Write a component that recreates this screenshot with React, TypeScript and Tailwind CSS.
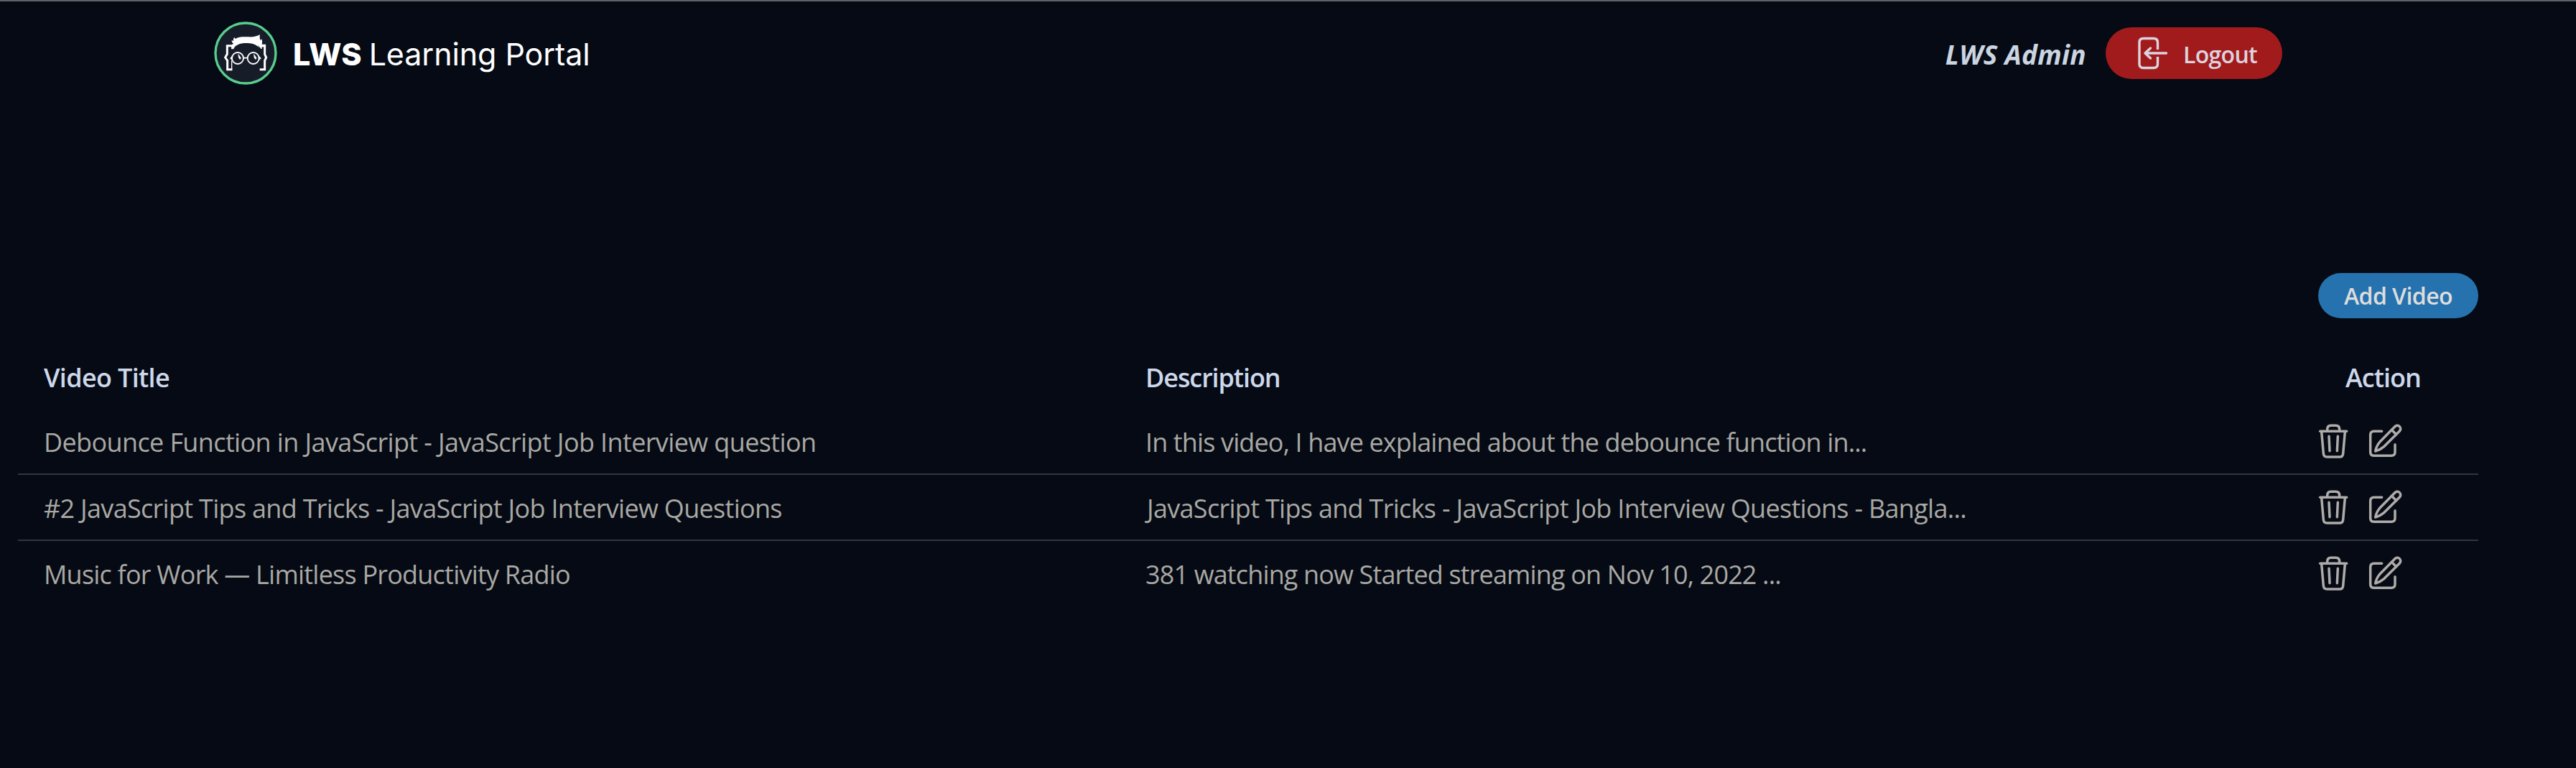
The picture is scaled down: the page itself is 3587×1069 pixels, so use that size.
import React from "react";

const videos = [
  {
    title: "Debounce Function in JavaScript - JavaScript Job Interview question",
    titleClass: "tracking-[-0.62px]",
    description: "In this video, I have explained about the debounce function in...",
    descriptionClass: "tracking-[-0.87px]",
  },
  {
    title: "#2 JavaScript Tips and Tricks - JavaScript Job Interview Questions",
    titleClass: "tracking-[-0.7px]",
    description: "JavaScript Tips and Tricks - JavaScript Job Interview Questions - Bangla...",
    descriptionClass: "pl-0.5 tracking-[-0.7px]",
  },
  {
    title: "Music for Work — Limitless Productivity Radio",
    titleClass: "tracking-[-0.78px]",
    description: "381 watching now Started streaming on Nov 10, 2022 ...",
    descriptionClass: "tracking-[-0.86px]",
  },
];

function Logo() {
  return (
    <svg className="size-[88px] shrink-0" viewBox="22 30 264 264" fill="none">
      <circle cx="154" cy="162" r="126" fill="#171c29" stroke="#59cd8e" strokeWidth="10" />
      {/* hair */}
      <path
        fill="#fff"
        d="M97 126 L104 122 C98 119 96 114 96 107 C98 110 101 111 104 110 C102 105 103 100 107 95 C108 99 110 101 113 101 C125 93 145 93 165 94 C185 95 202 92 214 84 C212 93 213 101 216 108 C219 106 220 104 220 101 C224 109 224 117 222 125 H238 V136 H222 V144 H218 L212 135 L208 138 V130 L204 134 C190 119 150 117 128 124 C114 129 106 136 104 145 H94 V136 H97 Z"
      />
      {/* braces around the face */}
      <path stroke="#fff" strokeWidth="9" d="M100 131 H77 V166 L69 180 L78 193 V230 H98" />
      <path stroke="#fff" strokeWidth="4" d="M96 232 V193" />
      <path stroke="#fff" strokeWidth="9" d="M214 131 H234 V167 L240 180 L234 193 V230 H213" />
      {/* glasses */}
      <circle cx="121" cy="183" r="24" stroke="#fff" strokeWidth="5.5" />
      <circle cx="186" cy="183" r="24" stroke="#fff" strokeWidth="5.5" />
      <path stroke="#fff" strokeWidth="5" d="M145 182 H162 M210 177 L216 183 L210 189 M97 177 L92 183 L97 189" />
      <path stroke="#fff" strokeWidth="4.5" strokeLinecap="round" d="M124 169 L133 183 M125 177 L130 186 M189 169 L198 183 M190 177 L195 186" />
    </svg>
  );
}

function LogoutIcon() {
  return (
    <svg
      className="h-[48px] w-[46px]"
      viewBox="0 0 46 48"
      fill="none"
      stroke="#dcd3df"
      strokeWidth="3.4"
      strokeLinecap="round"
      strokeLinejoin="round"
    >
      <path strokeLinecap="butt" d="M29.5 19 V9 Q29.5 3.5 24 3.5 H9.5 Q4 3.5 4 9 V39 Q4 44.5 9.5 44.5 H24 Q29.5 44.5 29.5 39 V29" />
      <path d="M41.5 24 H12 M19.5 17 L12 24 L19.5 31" />
    </svg>
  );
}

function TrashIcon() {
  return (
    <svg
      className="h-[52px] w-[46px]"
      viewBox="78 54 138 156"
      fill="none"
      stroke="#aeaba8"
      strokeWidth="10.5"
      strokeLinecap="round"
      strokeLinejoin="round"
    >
      <path d="M92 91 H203" />
      <path d="M122 89 V84 Q122 67 137 67 H158 Q173 67 173 84 V89" />
      <path d="M98 93 L106 184 Q107 198 121 198 H174 Q187 198 188 184 L196 93" />
      <path d="M129 112 L132 173 M166 112 L163 173" />
    </svg>
  );
}

function EditIcon() {
  return (
    <svg
      className="size-[52px]"
      viewBox="288 54 156 156"
      fill="none"
      stroke="#aeaba8"
      strokeWidth="10.5"
      strokeLinecap="round"
      strokeLinejoin="round"
    >
      <path d="M350 91 H317 Q302 91 302 106 V178 Q302 193 317 193 H390 Q405 193 405 178 V146" />
      <path d="M406 70 A13.5 13.5 0 0 1 425 89 L360 154 Q345 167 323 174 Q327 152 341 136 Z" />
      <path d="M391 85 L410 104" />
    </svg>
  );
}

export default function App() {
  return (
    <div className="h-[1069px] w-full overflow-hidden border-t-2 border-[#5e6266] bg-[#050a14] font-['Open_Sans','Noto_Sans',sans-serif]">
      <header className="ml-[298px] flex h-36 w-[2880px] items-center justify-between">
        <div className="flex items-center">
          <Logo />
          <div className="ml-[22px] whitespace-nowrap pt-0.5 font-['Inter',sans-serif] text-[43px] leading-none text-white">
            <span className="font-extrabold">LWS</span>
            <span className="ml-[10px] tracking-[-0.08px]">Learning Portal</span>
          </div>
        </div>
        <div className="flex items-center">
          <span className="pt-[3px] text-[37px] leading-none font-bold tracking-[0.3px] text-[#cbd5e1] italic">LWS Admin</span>
          <button className="ml-[27px] flex h-18 w-[246px] items-center rounded-full bg-[#a11b1d] pl-[43px]">
            <LogoutIcon />
            <span className="ml-[19px] pt-[3px] text-[32px] leading-none font-semibold tracking-[-0.7px] text-[#dcd3df]">Logout</span>
          </button>
        </div>
      </header>

      <main className="mt-[234px] ml-[25px] w-[3426px]">
        <div className="flex justify-end">
          <button className="h-[63px] w-[223px] rounded-full bg-[#2572ae] pt-px text-[32px] leading-none font-semibold tracking-[-0.56px] text-[#dedddc]">
            Add Video
          </button>
        </div>

        <div className="mt-[38px] grid h-[88px] grid-cols-[1570px_1630px_1fr] items-center pt-0.5 text-[36px] leading-none font-semibold text-[#cdd8ea]">
          <div className="pl-9 tracking-[-0.66px]">Video Title</div>
          <div className="tracking-[-1.1px]">Description</div>
          <div className="pl-[41px] tracking-[-0.98px]">Action</div>
        </div>

        {videos.map((video) => (
          <div
            key={video.title}
            className="grid h-[92px] grid-cols-[1570px_1630px_1fr] items-center border-b-2 border-[#31353d] text-[36px] leading-none whitespace-nowrap text-[#a9a8a3] last:border-transparent"
          >
            <div className="pt-1 pl-9">
              <span className={video.titleClass}>{video.title}</span>
            </div>
            <div className="pt-1">
              <span className={video.descriptionClass}>{video.description}</span>
            </div>
            <div className="flex items-center gap-6 pb-px pl-px">
              <TrashIcon />
              <EditIcon />
            </div>
          </div>
        ))}
      </main>
    </div>
  );
}
